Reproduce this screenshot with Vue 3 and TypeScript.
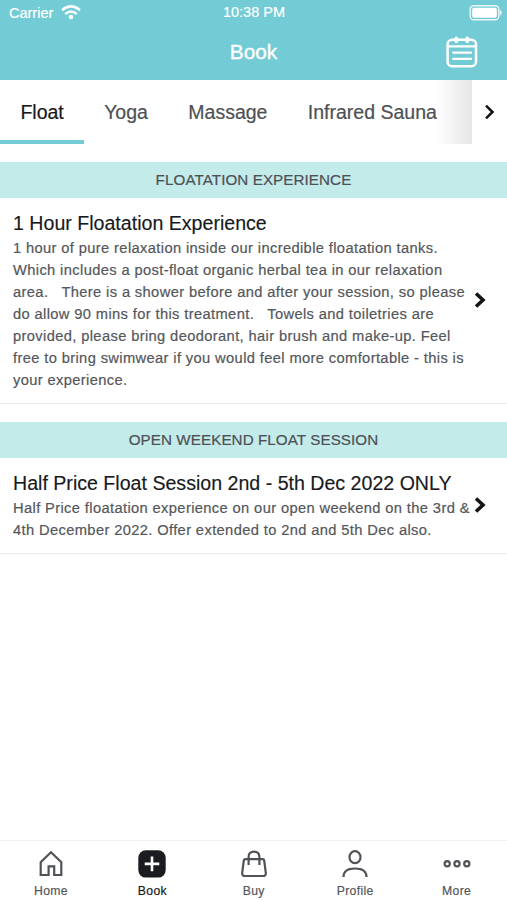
<script setup lang="ts">
import { ref } from 'vue'

interface Session {
  section: string
  title: string
  text: string
}

const tabs: string[] = ['Float', 'Yoga', 'Massage', 'Infrared Sauna']
const activeTab = ref('Float')

const sessions: Session[] = [
  {
    section: 'FLOATATION EXPERIENCE',
    title: '1 Hour Floatation Experience',
    text: '1 hour of pure relaxation inside our incredible floatation tanks.\nWhich includes a post-float organic herbal tea in our relaxation\narea.   There is a shower before and after your session, so please\ndo allow 90 mins for this treatment.   Towels and toiletries are\nprovided, please bring deodorant, hair brush and make-up. Feel\nfree to bring swimwear if you would feel more comfortable - this is\nyour experience.',
  },
  {
    section: 'OPEN WEEKEND FLOAT SESSION',
    title: 'Half Price Float Session 2nd - 5th Dec 2022 ONLY',
    text: 'Half Price floatation experience on our open weekend on the 3rd &\n4th December 2022. Offer extended to 2nd and 5th Dec also.',
  },
]

const navItems: string[] = ['Home', 'Book', 'Buy', 'Profile', 'More']
const activeNav = ref('Book')
</script>

<template>
  <div class="screen">
    <header class="header">
      <div class="status">
        <div class="carrier">
          <span>Carrier</span>
          <svg class="wifi" width="20" height="15" viewBox="0 0 20 15" fill="none" stroke="#fff" stroke-width="2.5">
            <path d="M1 5.2Q10-2.4 19 5.2" />
            <path d="M4.3 9Q10 4 15.7 9" />
            <circle cx="10" cy="12" r="2.3" fill="#fff" stroke="none" />
          </svg>
        </div>
        <span class="time">10:38 PM</span>
        <svg class="battery" width="34" height="16" viewBox="0 0 34 16">
          <rect x="1.2" y=".8" width="28.6" height="14" rx="3.5" fill="none" stroke="#fff" stroke-opacity=".85" stroke-width="1.4" />
          <rect x="3.2" y="2.8" width="24.6" height="10" rx="1.8" fill="#fff" />
          <path d="M31 4.8q3.4 3 0 6z" fill="#fff" />
        </svg>
      </div>
      <div class="titlebar">
        <h1>Book</h1>
        <svg class="calendar" width="32" height="32" viewBox="0 0 32 32" fill="none" stroke="#fff" stroke-width="2.5" stroke-linecap="round">
          <rect x="1.6" y="3.8" width="28.4" height="26.4" rx="4.5" />
          <path d="M2 10.4h28M7.2 16.6h18M7.2 22.8h18" stroke-width="2.2" />
          <path d="M10.3 2.4v2.8M21.3 2.4v2.8" stroke-width="3.8" />
        </svg>
      </div>
    </header>

    <nav class="tabs">
      <button
        v-for="tab in tabs"
        :key="tab"
        class="tab"
        :class="{ active: tab === activeTab }"
        @click="activeTab = tab"
      >{{ tab }}</button>
      <div class="fade"></div>
      <div class="next">
        <svg width="12" height="16" viewBox="0 0 12 16" fill="none" stroke="#111" stroke-width="2.5">
          <path d="M2 1.7L8.5 8 2 14.3" />
        </svg>
      </div>
    </nav>

    <main class="list">
      <section v-for="item in sessions" :key="item.section" class="group">
        <h2>{{ item.section }}</h2>
        <article>
          <div class="copy">
            <h3>{{ item.title }}</h3>
            <p>{{ item.text }}</p>
          </div>
          <svg class="chevron" width="13" height="18" viewBox="0 0 13 18" fill="none" stroke="#151515" stroke-width="3.6">
            <path d="M2 2.5L9 9l-7 6.5" />
          </svg>
        </article>
      </section>
    </main>

    <footer class="bottom">
      <button
        v-for="item in navItems"
        :key="item"
        class="nav"
        :class="{ active: item === activeNav }"
        @click="activeNav = item"
      >
        <svg width="30" height="30" viewBox="0 0 30 30" fill="none" stroke="#4f5357" stroke-width="2.2">
          <path v-if="item === 'Home'" d="M4.7 26V13.2L15 3.2l10.3 10V26h-7.1v-8.6h-5.6V26z" />
          <template v-else-if="item === 'Book'">
            <rect x="1.3" y="1.2" width="27.4" height="27.4" rx="7.5" fill="#1b1c1f" stroke="none" />
            <path d="M15 7.6v14.6M7.7 14.9h14.6" stroke="#fff" stroke-width="2.6" />
          </template>
          <template v-else-if="item === 'Buy'">
            <path d="M6.3 10.2h17.4q1.300 0 1.500 1.300l1.600 12.300q.3 3.200-2.800 3.200H6q-3.100 0-2.800-3.200l1.600-12.300q.2-1.300 1.500-1.300z" />
            <path d="M9.600 16V8q0-5.400 5.400-5.400T20.400 8v8" />
          </template>
          <template v-else-if="item === 'Profile'">
            <ellipse cx="15" cy="8.2" rx="5.5" ry="6" />
            <path d="M3.500 28q0-8.500 11.500-8.500T26.500 28" />
          </template>
          <template v-else>
            <circle cx="5.2" cy="14.8" r="2.6" />
            <circle cx="15" cy="14.8" r="2.6" />
            <circle cx="24.8" cy="14.8" r="2.6" />
          </template>
        </svg>
        <span>{{ item }}</span>
      </button>
    </footer>
  </div>
</template>

<style>
body {
  margin: 0;
  background: #fff;
}
</style>

<style scoped>
.screen {
  width: 507px;
  height: 900px;
  display: flex;
  flex-direction: column;
  overflow: hidden;
  background: #fff;
  font-family: "Liberation Sans", Arial, sans-serif;
}

h1, h2, h3, p {
  margin: 0;
  font-weight: 400;
}

button {
  border: 0;
  padding: 0;
  background: none;
  font-family: inherit;
}

svg {
  display: block;
  flex: none;
}

.header {
  height: 80px;
  flex: none;
  background: #72cbd5;
  color: #fff;
}

.status {
  height: 25px;
  display: grid;
  grid-template-columns: 1fr auto 1fr;
  align-items: center;
  padding: 0 4px 0 9px;
  font-size: 14.5px;
  -webkit-text-stroke: 0.2px #fff;
}

.carrier {
  display: flex;
  align-items: center;
  gap: 8px;
}

.time {
  margin-right: 4px;
  padding-bottom: 1px;
}

.battery {
  justify-self: end;
}

.titlebar {
  height: 54px;
  display: grid;
  grid-template-columns: 1fr auto 1fr;
  align-items: center;
}

.titlebar h1 {
  grid-column: 2;
  font-size: 20.8px;
  -webkit-text-stroke: 0.4px #fff;
}

.calendar {
  justify-self: end;
  margin-right: 29px;
}

.tabs {
  height: 64px;
  flex: none;
  display: flex;
}

.tab {
  padding: 4px 20px 0 20.4px;
  border-bottom: 4px solid transparent;
  color: #4d5055;
  font-size: 19.5px;
  white-space: nowrap;
  -webkit-text-stroke: 0.2px currentColor;
}

.tab.active {
  border-bottom-color: #72cbd5;
  color: #17191c;
}

.fade {
  width: 36px;
  flex: none;
  margin-left: -20.5px;
  background: linear-gradient(to right, rgba(230, 230, 230, 0), #e6e6e6);
}

.next {
  flex: 1;
  display: flex;
  align-items: center;
  justify-content: center;
}

.list {
  flex: 1;
}

.group {
  padding-top: 18px;
}

.group h2 {
  height: 36px;
  line-height: 36px;
  background: #c3ebea;
  color: #4d5055;
  font-size: 15.2px;
  letter-spacing: 0.08px;
  text-align: center;
  -webkit-text-stroke: 0.2px currentColor;
}

.group article {
  display: flex;
  align-items: center;
  justify-content: space-between;
  padding: 13px 20px 12px 13px;
  border-bottom: 1px solid #e9eaeb;
}

.group h3 {
  line-height: 24px;
  padding-bottom: 2px;
  color: #17191c;
  font-size: 19.6px;
  white-space: nowrap;
  -webkit-text-stroke: 0.15px currentColor;
}

.group p {
  color: #54575b;
  font-size: 14.7px;
  letter-spacing: 0.37px;
  line-height: 22px;
  white-space: pre;
  -webkit-text-stroke: 0.2px currentColor;
}

.copy {
  width: 460px;
}

.chevron {
  margin-bottom: 2px;
}

.bottom {
  height: 59px;
  flex: none;
  display: grid;
  grid-template-columns: repeat(5, 1fr);
  border-top: 1px solid #f0f0f1;
}

.nav {
  display: flex;
  flex-direction: column;
  align-items: center;
  gap: 5px;
  padding-top: 8px;
  padding-left: 0.6px;
  color: #54575b;
  font-size: 12.2px;
  letter-spacing: 0.35px;
  -webkit-text-stroke: 0.2px currentColor;
}

.nav.active {
  color: #17191c;
}
</style>
